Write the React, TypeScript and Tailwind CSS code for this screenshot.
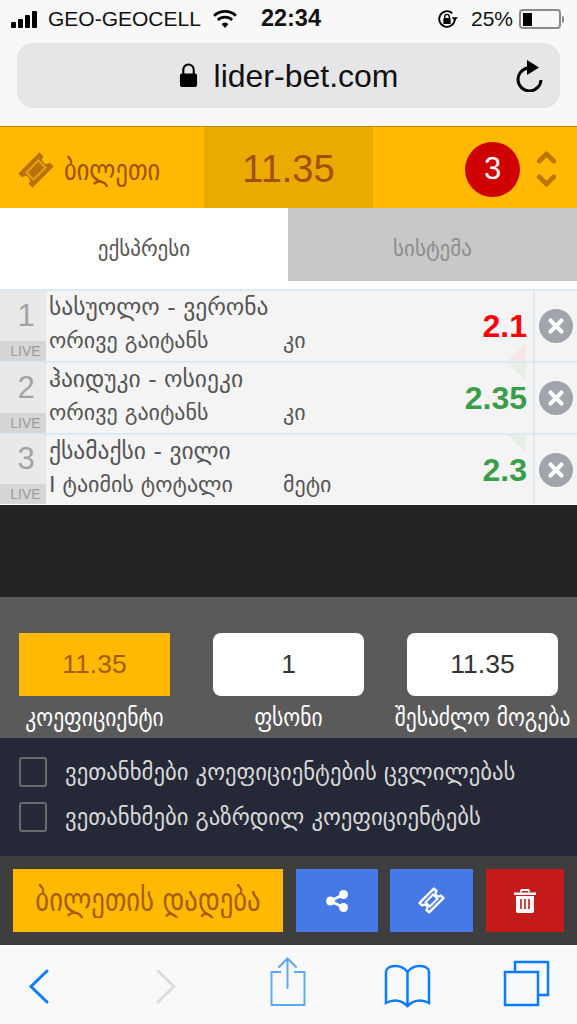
import { ChevronDown, ChevronUp, X } from 'lucide-react';

const sans = "font-['Liberation_Sans',Arial,sans-serif]";
const geo = "font-['DejaVu_Sans',sans-serif]";

const ticketPath = 'M5 10h30v5.500a4.500 4.500 0 0 0 0 9V30H5v-5.500a4.500 4.500 0 0 0 0-9z';

function TicketSolid({ className }: { className: string }) {
  return (
    <svg viewBox="0 0 40 40" className={className}>
      <g transform="rotate(-45 20 20)">
        <path d={ticketPath} fill="#b9720a" />
        <rect x="10.500" y="14" width="19" height="12" fill="#e8a208" />
        <rect x="12.500" y="16" width="15" height="8" fill="#b9720a" />
      </g>
    </svg>
  );
}

function TicketLine({ className }: { className: string }) {
  return (
    <svg viewBox="0 0 40 40" className={className} fill="none" stroke="currentColor">
      <g transform="rotate(-45 20 20)">
        <path d={ticketPath} strokeWidth="3.500" strokeLinejoin="round" />
        <rect x="12" y="15.500" width="16" height="9" strokeWidth="3" />
      </g>
    </svg>
  );
}

const rows = [
  { n: 1, match: 'სასუოლო - ვერონა', bet: 'ორივე გაიტანს', pick: 'კი', odd: '2.1', color: 'text-[#fb0007]', tri: 'down' },
  { n: 2, match: 'ჰაიდუკი - ოსიეკი', bet: 'ორივე გაიტანს', pick: 'კი', odd: '2.35', color: 'text-[#3a9d49]', tri: 'up' },
  { n: 3, match: 'ქსამაქსი - ვილი', bet: 'I ტაიმის ტოტალი', pick: 'მეტი', odd: '2.3', color: 'text-[#3a9d49]', tri: 'up' },
];

function StatusBar() {
  return (
    <div className={`flex h-[38px] items-center pl-[11px] pr-[13px] text-[21px] text-[#111] ${sans}`}>
      <div className="flex items-end gap-[2px]">
        <span className="h-[6px] w-[5px] rounded-[1px] bg-black" />
        <span className="h-[9px] w-[5px] rounded-[1px] bg-black" />
        <span className="h-[13px] w-[5px] rounded-[1px] bg-black" />
        <span className="h-[17px] w-[5px] rounded-[1px] bg-black" />
      </div>
      <span className="ml-[11px]">GEO-GEOCELL</span>
      <svg viewBox="0 0 26 20" className="ml-[11px] h-[19px] w-[26px]">
        <path d="M13 19l-3.600-4.200a5.400 5.400 0 0 1 7.200 0z" fill="#000" />
        <path d="M5.500 10.500a11 11 0 0 1 15 0M1.500 6a17 17 0 0 1 23 0" fill="none" stroke="#000" strokeWidth="2.800" />
      </svg>
      <span className="ml-[23px] text-[23.500px] font-bold">22:34</span>
      <svg viewBox="0 0 24 24" className="ml-auto h-[22px] w-[22px]">
        <path d="M20.500 12a8.500 8.500 0 1 1-2.800-6.300" fill="none" stroke="#000" strokeWidth="2" />
        <path d="M17 10h7l-3.500 4z" fill="#000" />
        <rect x="8" y="11" width="8" height="6.500" rx="1" fill="#000" />
        <path d="M9.500 11V9.500a2.500 2.500 0 0 1 5 0V11" fill="none" stroke="#000" strokeWidth="1.500" />
      </svg>
      <span className="ml-[13px]">25%</span>
      <div className="ml-[6px] flex h-[20px] w-[42px] items-center rounded-[4px] border-2 border-[#8a8a8a] pl-[2px]">
        <span className="h-[13px] w-[9px] bg-black" />
      </div>
      <span className="ml-[1px] h-[7px] w-[2px] rounded-r-full bg-[#8a8a8a]" />
    </div>
  );
}

function UrlBar() {
  return (
    <div className="mt-[5px] px-[17px]">
      <div className={`relative flex h-[65px] items-center justify-center rounded-[16px] bg-[#e6e6e8] ${sans}`}>
        <svg viewBox="0 0 20 26" className="mr-[16px] h-[25px] w-[19px]">
          <path d="M4.500 12V7a5.500 5.500 0 0 1 11 0v5" fill="none" stroke="#000" strokeWidth="2.200" />
          <rect x="1" y="11" width="18" height="14" rx="2" fill="#000" />
        </svg>
        <span className="text-[32px] leading-none text-[#111]">lider-bet.com</span>
        <svg viewBox="0 0 30 32" className="absolute right-[16px] top-[17px] h-[32px] w-[30px]">
          <path d="M14 8a11.500 11.500 0 1 0 13 12" fill="none" stroke="#000" strokeWidth="3" />
          <path d="M13 0l12 7.500-12 7.500z" fill="#000" />
        </svg>
      </div>
    </div>
  );
}

function TicketHeader() {
  return (
    <div className="flex h-[82px] items-stretch border-t border-[#b98a10] bg-[#ffb900] text-[#a14f00]">
      <div className="flex w-[204px] items-center pl-[16px] pt-[5px]">
        <TicketSolid className="h-[40px] w-[40px]" />
        <span className={`ml-[8px] inline-block scale-y-[1.2] text-[24.500px] ${geo}`}>ბილეთი</span>
      </div>
      <div className={`flex w-[169px] items-center justify-center bg-[#ebaa00] pt-[3px] text-[38px] ${sans}`}>11.35</div>
      <div className="flex flex-1 items-center justify-end pr-[16px] pt-[3px]">
        <div className={`flex h-[55px] w-[55px] items-center justify-center rounded-full bg-[#cf0000] text-[31px] text-white ${sans}`}>
          3
        </div>
        <div className="ml-[12px] flex flex-col text-[#bd7500]">
          <ChevronUp className="-mb-[3px] h-[29px] w-[29px]" strokeWidth={4} />
          <ChevronDown className="-mt-[3px] h-[29px] w-[29px]" strokeWidth={4} />
        </div>
      </div>
    </div>
  );
}

function Tabs() {
  return (
    <div className={`flex h-[81px] items-start bg-white text-[21px] ${geo}`}>
      <div className="flex h-[73px] w-[288px] items-center justify-center pt-[11px] text-[#555]">ექსპრესი</div>
      <div className="flex h-[73px] flex-1 items-center justify-center bg-[#c8c8c8] pt-[11px] text-[#8d8d8d]">სისტემა</div>
    </div>
  );
}

function Row({ r }: { r: (typeof rows)[number] }) {
  return (
    <div className="flex h-[72px] border-t-2 border-[#dce9f3] bg-[#f4f4f4] last:h-[71px]">
      <div className={`flex w-[46px] flex-col bg-[#e9e9e9] ${sans}`}>
        <div className="flex flex-1 items-center justify-center pl-[6px] text-[31px] text-[#a3a3a3]">{r.n}</div>
        <div className="flex h-[20px] items-center justify-center bg-[#d6d6d6] pl-[5px] text-[14px] text-[#9a9a9a]">LIVE</div>
      </div>
      <div className={`flex min-w-0 flex-1 flex-col pl-[3px] text-[#555] ${geo}`}>
        <div className="flex h-[33px] items-center whitespace-nowrap text-[23.500px]">{r.match}</div>
        <div className="flex flex-1 items-center whitespace-nowrap pb-[4px] text-[22px]">
          <span className="w-[234px]">{r.bet}</span>
          <span>{r.pick}</span>
        </div>
      </div>
      <div className="relative flex w-[85px] shrink-0 items-center justify-end border-r-2 border-[#dce9f3] pr-[6px]">
        <span className={`text-[32px] font-bold leading-none ${r.color} ${sans}`}>{r.odd}</span>
        {r.tri === 'down' ? (
          <span className="absolute bottom-0 right-[7px] h-[18px] w-[18px] bg-[#f6e6e4] [clip-path:polygon(100%_0,100%_100%,0_100%)]" />
        ) : (
          <span className="absolute right-[7px] top-0 h-[18px] w-[18px] bg-[#e6efe6] [clip-path:polygon(0_0,100%_0,100%_100%)]" />
        )}
      </div>
      <div className="flex w-[42px] shrink-0 items-center justify-center">
        <div className="flex h-[34px] w-[34px] items-center justify-center rounded-full bg-[#9fa5ab] text-white">
          <X className="h-[22px] w-[22px]" strokeWidth={4.500} />
        </div>
      </div>
    </div>
  );
}

function Stake({ value, label, active }: { value: string; label: string; active?: boolean }) {
  return (
    <div className="flex w-[151px] flex-col items-center">
      <div
        className={`flex h-[63px] w-full items-center justify-center text-[26.500px] ${sans} ${
          active ? 'bg-[#ffb900] text-[#a85c00]' : 'rounded-[8px] bg-white text-[#333]'
        }`}
      >
        {value}
      </div>
      <span className={`mt-[10px] inline-block scale-y-[1.150] whitespace-nowrap text-[21.500px] leading-[24px] text-white ${geo}`}>{label}</span>
    </div>
  );
}

function Check({ label }: { label: string }) {
  return (
    <div className="flex h-[30px] items-center gap-[18px]">
      <span className="h-[30px] w-[28px] rounded-[3px] border-2 border-[#6a6a6a]" />
      <span className={`whitespace-nowrap text-[22.700px] leading-[30px] text-[#d8d8d8] ${geo}`}>{label}</span>
    </div>
  );
}

function ActionBar() {
  return (
    <div className="flex h-[89px] items-start bg-[#3e3e3e] pl-[13px] pt-[13px]">
      <div className={`flex h-[63px] w-[270px] items-center justify-center bg-[#ffb900] ${geo}`}>
        <span className="inline-block scale-y-[1.200] text-[26.700px] text-[#a85c00]">ბილეთის დადება</span>
      </div>
      <div className="ml-[13px] flex h-[63px] w-[82px] items-center justify-center bg-[#4678e6]">
        <svg viewBox="0 0 22 22" className="h-[22px] w-[22px]" fill="#fff" stroke="#fff">
          <path d="M17.500 4.500L4.500 11l13 6.500" fill="none" strokeWidth="2.800" />
          <circle cx="17.500" cy="4.500" r="4.500" stroke="none" />
          <circle cx="4.500" cy="11" r="4.500" stroke="none" />
          <circle cx="17.500" cy="17.500" r="4.500" stroke="none" />
        </svg>
      </div>
      <div className="ml-[12px] flex h-[63px] w-[83px] items-center justify-center bg-[#4678e6] text-white">
        <TicketLine className="h-[27px] w-[27px]" />
      </div>
      <div className="ml-[13px] flex h-[63px] w-[78px] items-center justify-center bg-[#c51a1a]">
        <svg viewBox="0 0 22 24" className="h-[24px] w-[22px]">
          <path d="M0 3.500h22v2.500H0z" fill="#fff" />
          <path d="M7 3.500V2a1 1 0 0 1 1-1h6a1 1 0 0 1 1 1v1.500" fill="none" stroke="#fff" strokeWidth="1.800" />
          <path d="M2 7h18v15a2 2 0 0 1-2 2H4a2 2 0 0 1-2-2z" fill="#fff" />
          <path d="M7 10v10M11 10v10M15 10v10" stroke="#c51a1a" strokeWidth="1.600" />
        </svg>
      </div>
    </div>
  );
}

function SafariBar() {
  return (
    <div className="flex h-[79px] items-center bg-[#f9f9f9]">
      <svg viewBox="0 0 577 79" className="h-[79px] w-[577px]" fill="none" strokeLinecap="round">
        <path d="M47 26L31 41.500 47 57" stroke="#0a7cff" strokeWidth="3" />
        <path d="M158 26l16 15.500L158 57" stroke="#dcdcdc" strokeWidth="3" />
        <path d="M281 27h-9.500v33h33V27H294" stroke="#5aa9fb" strokeWidth="2" strokeLinecap="butt" />
        <path d="M287.500 43V14M279 22l8.500-8.500L296 22" stroke="#5aa9fb" strokeWidth="2" />
        <path
          d="M407.500 61c-6-6-14-7-21.500-3V27c0-7 15-9 21.500 0 6.500-9 21.500-7 21.500 0v31c-7.500-4-15.500-3-21.500 3zM407.500 27v34"
          stroke="#0a7cff"
          strokeWidth="2.500"
          strokeLinecap="butt"
        />
        <path d="M515 26v-9h33v33h-9" stroke="#0a7cff" strokeWidth="2.500" strokeLinecap="butt" />
        <rect x="505" y="27" width="33" height="33" stroke="#0a7cff" strokeWidth="2.500" />
      </svg>
    </div>
  );
}

export default function App() {
  return (
    <div className="h-[1024px] w-[577px] overflow-hidden bg-[#232323]">
      <div className="h-[126px] bg-[#f8f8f8]">
        <StatusBar />
        <UrlBar />
      </div>
      <TicketHeader />
      <Tabs />
      <div className="border-b border-white">
        {rows.map((r) => (
          <Row key={r.n} r={r} />
        ))}
      </div>
      <div className="h-[92px] bg-[#232323]" />
      <div className="flex h-[141px] justify-between bg-[#5a5a5a] px-[19px] pt-[36px]">
        <Stake active value="11.35" label="კოეფიციენტი" />
        <Stake value="1" label="ფსონი" />
        <Stake value="11.35" label="შესაძლო მოგება" />
      </div>
      <div className="flex h-[118px] flex-col gap-[15px] bg-[#252836] pl-[19px] pt-[19px]">
        <Check label="ვეთანხმები კოეფიციენტების ცვლილებას" />
        <Check label="ვეთანხმები გაზრდილ კოეფიციენტებს" />
      </div>
      <ActionBar />
      <SafariBar />
    </div>
  );
}
